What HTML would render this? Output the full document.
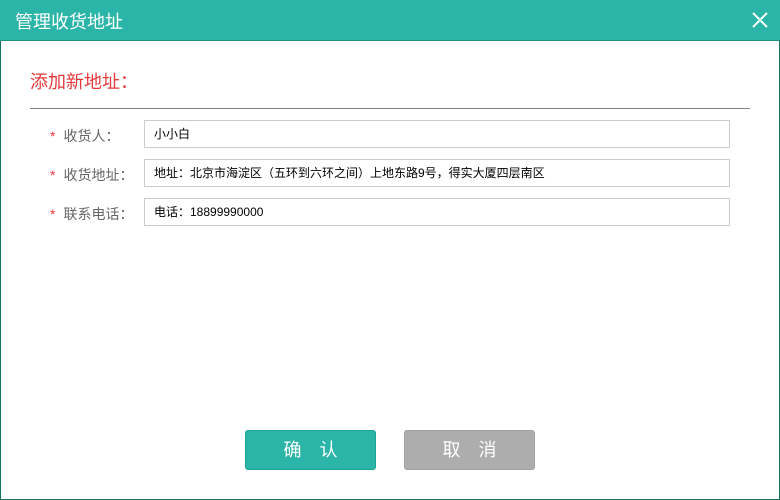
<!DOCTYPE html><html><head><meta charset="utf-8"><style>
body{margin:0;width:780px;height:500px;overflow:hidden;font-family:"Liberation Sans","Noto Sans CJK SC",sans-serif;background:#fff}
.box{position:absolute;left:0;top:0;width:778px;height:499px;border:1px solid #14745f;border-top:none;}
.hd{position:absolute;left:0;top:0;width:780px;height:40px;background:#2bb5a8;border-bottom:1px solid #1f8f82;}
.hd span{position:absolute;left:15px;top:8px;color:#fff;font-size:18px;}
.sub{position:absolute;left:30px;top:68px;color:#e4393c;font-size:18px}
.hr{position:absolute;left:30px;top:108px;width:720px;height:1px;background:#808080}
.lb{position:absolute;left:50px;font-size:14px;color:#666}
.lb b{color:#e4393c;font-weight:normal;margin-right:8px}
.in{position:absolute;left:144px;height:26px;border:1px solid #ccc;font-size:12px;line-height:26px;padding-left:9px;width:575px;color:#000}
.bt{position:absolute;top:430px;height:40px;width:131px;box-sizing:border-box;border-radius:3px;color:#fff;font-size:18px;text-align:center;line-height:38px;letter-spacing:18px;text-indent:18px}
</style></head><body>
<div class="box"></div>
<div class="hd"><span>管理收货地址</span>
<svg style="position:absolute;left:751px;top:11px" width="18" height="18"><path d="M2 2L16 16M16 2L2 16" stroke="#fff" stroke-width="2"/></svg></div>
<div class="sub">添加新地址：</div>
<div class="hr"></div>
<div class="lb" style="top:126px"><b>*</b>收货人：</div>
<div class="in" style="top:120px">小小白</div>
<div class="lb" style="top:165px"><b>*</b>收货地址：</div>
<div class="in" style="top:159px">地址：北京市海淀区（五环到六环之间）上地东路9号，得实大厦四层南区</div>
<div class="lb" style="top:204px"><b>*</b>联系电话：</div>
<div class="in" style="top:198px">电话：18899990000</div>
<div class="bt" style="left:245px;background:#2bb5a8;border:1px solid #1aa596">确认</div>
<div class="bt" style="left:404px;background:#adadad;border:1px solid #a2a2a2">取消</div>
</body></html>
